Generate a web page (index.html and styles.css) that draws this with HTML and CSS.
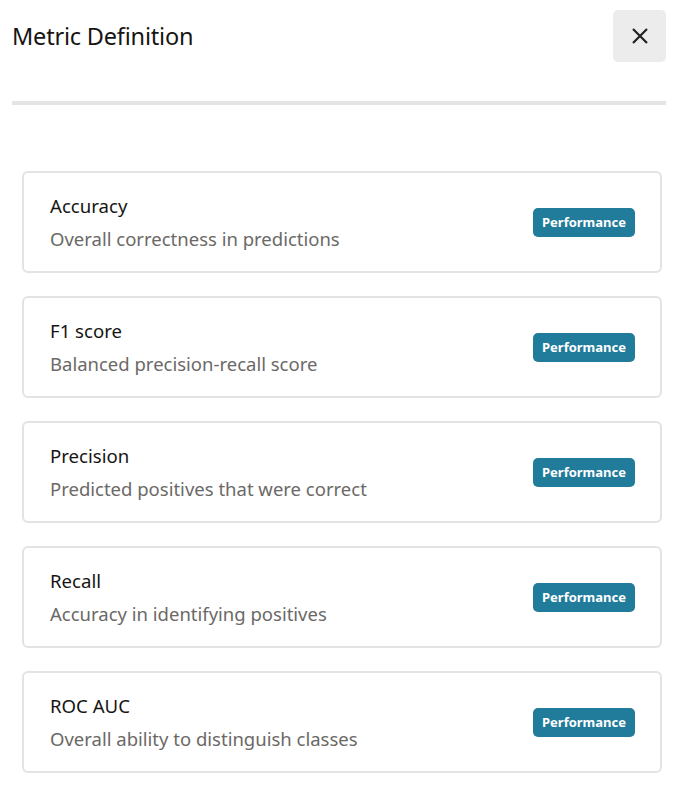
FILE: index.html
```html
<!DOCTYPE html>
<html lang="en">
<head>
<meta charset="utf-8">
<title>Metric Definition</title>
<link rel="stylesheet" href="styles.css">
</head>
<body>
<div class="panel">
  <header class="header">
    <h1 class="title">Metric Definition</h1>
    <button class="close" aria-label="Close">
      <svg width="20" height="20" viewBox="0 0 20 20"><path d="M3 3 L17 17 M17 3 L3 17" stroke="#222" stroke-width="2.2" stroke-linecap="butt"/></svg>
    </button>
  </header>
  <div class="divider"></div>
  <ul class="list">
    <li class="card">
      <div class="text"><div class="name">Accuracy</div><div class="desc">Overall correctness in predictions</div></div>
      <span class="badge">Performance</span>
    </li>
    <li class="card">
      <div class="text"><div class="name">F1 score</div><div class="desc">Balanced precision-recall score</div></div>
      <span class="badge">Performance</span>
    </li>
    <li class="card">
      <div class="text"><div class="name">Precision</div><div class="desc">Predicted positives that were correct</div></div>
      <span class="badge">Performance</span>
    </li>
    <li class="card">
      <div class="text"><div class="name">Recall</div><div class="desc">Accuracy in identifying positives</div></div>
      <span class="badge">Performance</span>
    </li>
    <li class="card">
      <div class="text"><div class="name">ROC AUC</div><div class="desc">Overall ability to distinguish classes</div></div>
      <span class="badge">Performance</span>
    </li>
  </ul>
</div>
</body>
</html>
```
FILE: styles.css
```css
* { box-sizing: border-box; }
html, body { margin: 0; padding: 0; background: #fff; }
body { font-family: "Noto Sans", "Open Sans", sans-serif; color: #161513; }
.panel { padding: 10px 10px 0 12px; }
.header { display: flex; justify-content: space-between; align-items: flex-start; }
.title { margin: 11px 0 0; font-size: 23.5px; font-weight: 400; line-height: 30px; letter-spacing: -0.2px; }
.close { width: 53px; height: 52px; border: none; border-radius: 5px; background: #ececec; display: flex; align-items: center; justify-content: center; padding: 0; }
.divider { height: 4px; background: #e5e5e5; margin-top: 39px; }
.list { list-style: none; margin: 66px 0 0; padding: 0 4px 0 10px; display: flex; flex-direction: column; gap: 23px; }
.card { height: 102px; border: 2px solid #e3e3e3; border-radius: 6px; display: flex; align-items: center; justify-content: space-between; padding: 0 25px 0 26px; }
.text { display: flex; flex-direction: column; gap: 9px; margin-top: 0; }
.name { font-size: 18.6px; line-height: 24px; color: #161513; }
.desc { font-size: 18.5px; line-height: 24px; color: #6b6966; }
.badge { background: #217b9a; color: #fff; font-weight: 700; font-size: 13px; line-height: 29px; height: 29px; padding: 0 9px; border-radius: 5px; }
```
